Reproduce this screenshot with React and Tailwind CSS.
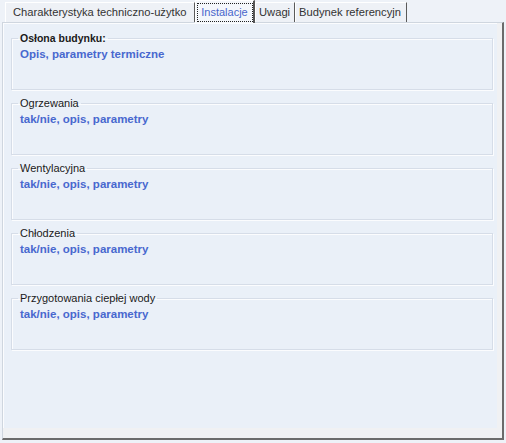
import React from "react";

const groups = [
  { title: "Osłona budynku:", text: "Opis, parametry termiczne", bold: true },
  { title: "Ogrzewania", text: "tak/nie, opis, parametry" },
  { title: "Wentylacyjna", text: "tak/nie, opis, parametry" },
  { title: "Chłodzenia", text: "tak/nie, opis, parametry" },
  { title: "Przygotowania ciepłej wody", text: "tak/nie, opis, parametry" },
];

function Tab({ label, width, pad, selected }) {
  if (selected) {
    return (
      <div
        className="relative z-10 -mb-[1px] flex h-[23px] items-start justify-center border-l border-t border-white border-r-2 border-r-[#555] bg-[#f4f7fb] pt-[2px]"
        style={{ width }}
      >
        <span className="flex h-[19px] w-[56px] items-center justify-center border border-dotted border-[#222] leading-none text-[#4866cc]">
          {label}
        </span>
      </div>
    );
  }
  return (
    <div
      className="flex h-[20px] items-center border-l border-t border-white border-r border-r-[#5a5a5a] bg-[#eef1f6] text-[11.2px] text-[#333]"
      style={{ width, paddingLeft: pad }}
    >
      {label}
    </div>
  );
}

function Group({ title, text, bold }) {
  return (
    <fieldset className="h-[59px] w-[482px] border border-[#d6dde8] pl-[6px] pr-[6px] pt-[2px] shadow-[inset_1px_1px_0_#fbfcfe,1px_1px_0_#fbfcfe]">
      <legend
        className={`px-[2px] leading-[14px] text-[#1a1a1a] ${
          bold ? "text-[10.5px] font-bold" : "text-[11px] font-normal"
        }`}
      >
        {title}
      </legend>
      <div className="pl-[2px] text-[11.5px] font-bold leading-[14px] text-[#4868cf]">
        {text}
      </div>
    </fieldset>
  );
}

export default function App() {
  return (
    <div className="h-[443px] w-[506px] overflow-hidden bg-[#eef2f8] font-['Liberation_Sans',Arial,sans-serif] text-[11px]">
      {/* tabs */}
      <div className="flex h-[22px] items-end pl-[5px]">
        <Tab label="Charakterystyka techniczno-użytko" width={190} pad={7} />
        <Tab label="Instalacje" width={60} selected />
        <Tab label="Uwagi" width={40} pad={3} />
        <Tab label="Budynek referencyjn" width={112} pad={3} />
      </div>

      {/* panel */}
      <div className="ml-[2px] flex h-[418px] w-[502px] flex-col border-l border-t border-[#cfd6df] border-r-2 border-b-2 border-r-[#6b6b6b] border-b-[#6b6b6b] bg-[#f0f1f3] pb-[10px] pr-[5px]">
        <div className="flex flex-1 flex-col gap-[6px] bg-[#eaf0f8] pl-[8px] pt-[8px] shadow-[inset_0_1px_0_#fbfcfe,inset_1px_0_0_#fbfcfe]">
          {groups.map((g) => (
            <Group key={g.title} {...g} />
          ))}
        </div>
      </div>
    </div>
  );
}
